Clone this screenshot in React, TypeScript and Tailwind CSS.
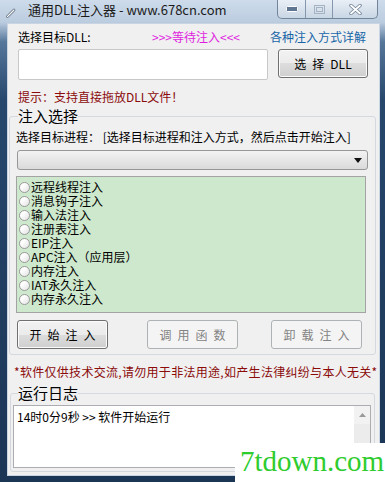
import React from "react";

const methods = [
  "远程线程注入",
  "消息钩子注入",
  "输入法注入",
  "注册表注入",
  "EIP注入",
  "APC注入（应用层）",
  "内存注入",
  "IAT永久注入",
  "内存永久注入",
];

function Radio() {
  return (
    <span className="mr-[1px] inline-block h-[11px] w-[11px] shrink-0 rounded-full border border-[#9a9a9a] bg-[linear-gradient(135deg,#ffffff_30%,#e2e2e2)]" />
  );
}

function SpacedButton({ text, disabled, className }: { text: string; disabled?: boolean; className: string }) {
  return (
    <div
      className={
        (disabled
          ? "border-[#adb2b5] bg-[#f4f4f4] text-[#838383] "
          : "border-[#707070] bg-[linear-gradient(180deg,#f2f2f2_0%,#ebebeb_50%,#dddddd_50%,#cfcfcf_100%)] text-black shadow-[inset_0_0_0_1px_#fbfbfb] ") +
        "flex h-[29px] w-[91px] items-center justify-center rounded-[3px] border pl-[6px] tracking-[6px] " +
        className
      }
    >
      {text}
    </div>
  );
}

export default function App() {
  return (
    <div className="relative h-[482px] w-[385px] overflow-hidden bg-[linear-gradient(180deg,#cddbeb_0px,#bccde0_22px,#56779a_42px,#27476d_100px,#1b3555_100%)] font-['Noto_Sans_CJK_SC','Noto_Sans',sans-serif]">
      {/* title bar */}
      <div className="flex h-[23px] items-start">
        <svg className="ml-[6px] mt-[8px]" width="10" height="10" viewBox="0 0 10 10">
          <path d="M1.5 8.5 L8 2" stroke="#5d6a78" strokeWidth="2.6" strokeLinecap="round" />
          <path d="M1.5 8.5 L8 2" stroke="#f5f7fa" strokeWidth="1.2" strokeLinecap="round" />
        </svg>
        <span className="ml-[12px] mt-[2px] text-[13px] leading-[16px] text-[#1b1b1b]">
          通用DLL注入器 - www.678cn.com
        </span>
        <div className="ml-auto mr-[7px] flex h-[19px] overflow-hidden rounded-b-[5px] border border-t-0 border-[#72859b] bg-[linear-gradient(180deg,#e9eff6,#c9d6e4)]">
          <div className="flex w-[28px] items-center justify-center border-r border-[#8597ac]">
            <svg width="12" height="6" viewBox="0 0 12 6">
              <rect x="0.5" y="0.5" width="11" height="5" rx="1" fill="#5f7692" stroke="#ffffff" />
            </svg>
          </div>
          <div className="flex w-[27px] items-center justify-center border-r border-[#8597ac]">
            <svg width="11" height="9" viewBox="0 0 11 9">
              <rect x="0.5" y="0.5" width="10" height="8" fill="none" stroke="#a4b2c3" />
              <rect x="2.5" y="2.5" width="6" height="4" fill="none" stroke="#a4b2c3" />
            </svg>
          </div>
          <div className="flex w-[44px] items-center justify-center">
            <svg width="13" height="11" viewBox="0 0 13 11">
              <path d="M2 1.5 L11 9.5 M11 1.5 L2 9.5" stroke="#6f8196" strokeWidth="3.4" strokeLinecap="round" />
              <path d="M2 1.5 L11 9.5 M11 1.5 L2 9.5" stroke="#ffffff" strokeWidth="1.8" strokeLinecap="round" />
            </svg>
          </div>
        </div>
      </div>

      {/* client area */}
      <div className="ml-[7px] mr-[5px] h-[453px] border border-[#c9d5e2] bg-[#f0f0f0] text-[12px] leading-[14px] text-black">
        <div className="mt-[6px] flex h-[14px]">
          <span className="ml-[10px] w-[134px]">选择目标DLL:</span>
          <span className="w-[118px] text-[#e01ee0]">&gt;&gt;&gt;等待注入&lt;&lt;&lt;</span>
          <span className="text-[#1766a8]">各种注入方式详解</span>
        </div>

        <div className="mt-[5px] flex items-start">
          <div className="ml-[10px] h-[31px] w-[250px] rounded-[2px] border border-[#c8c8c8] bg-white" />
          <div className="ml-[10px] flex h-[29px] w-[90px] items-center justify-center gap-[6px] rounded-[3px] border border-[#707070] bg-[linear-gradient(180deg,#f2f2f2_0%,#ebebeb_50%,#dddddd_50%,#cfcfcf_100%)] shadow-[inset_0_0_0_1px_#fbfbfb]">
            <span>选</span>
            <span>择</span>
            <span>DLL</span>
          </div>
        </div>

        <div className="ml-[10px] mt-[10px] text-[#8b0a0a]">提示：支持直接拖放DLL文件！</div>

        {/* 注入选择 group */}
        <fieldset className="ml-[1px] mt-[4px] w-[367px] rounded-[3px] border border-[#d3d9df] pb-[5px]">
          <legend className="ml-[8px] text-[15px] leading-[16px]">注入选择</legend>
          <div className="ml-[6px] mt-[6px] whitespace-nowrap">选择目标进程： [选择目标进程和注入方式，然后点击开始注入]</div>
          <div className="ml-[7px] mt-[6px] flex h-[20px] w-[351px] items-center justify-end rounded-[3px] border border-[#979797] bg-[linear-gradient(180deg,#f3f3f3,#dadada)] pr-[5px]">
            <svg width="8" height="5" viewBox="0 0 8 5">
              <path d="M0 0 H8 L4 5 Z" fill="#111111" />
            </svg>
          </div>
          <div className="ml-[6px] mt-[6px] h-[137px] w-[350px] border border-[#a3a3a3] bg-[#cde8cc] pl-[2px] pt-[3px]">
            {methods.map((m) => (
              <div key={m} className="flex h-[14px] items-center">
                <Radio />
                <span className="leading-[14px]">{m}</span>
              </div>
            ))}
          </div>
          <div className="mt-[7px] flex">
            <SpacedButton text="开始注入" className="ml-[7px]" />
            <SpacedButton text="调用函数" disabled className="ml-[39px] w-[90px]" />
            <SpacedButton text="卸载注入" disabled className="ml-[33px]" />
          </div>
        </fieldset>

        <div className="ml-[6px] mt-[10px] whitespace-nowrap tracking-[0.3px] text-[#8b0a0a]">
          *软件仅供技术交流,请勿用于非法用途,如产生法律纠纷与本人无关*
        </div>

        {/* 运行日志 group */}
        <fieldset className="ml-[2px] mt-[6px] w-[365px] rounded-[3px] border border-[#d3d9df] pb-[3px]">
          <legend className="ml-[7px] text-[15px] leading-[16px]">运行日志</legend>
          <div className="ml-[2px] mt-[4px] flex h-[63px] w-[358px] border border-[#abadb3] bg-white">
            <div className="flex-1 pl-[3px] pt-[4px]">14时0分9秒 &gt;&gt; 软件开始运行</div>
            <div className="flex w-[16px] flex-col bg-[#ececec]">
              <div className="flex h-[18px] items-center justify-center bg-[#f2f2f2]">
                <svg width="7" height="4" viewBox="0 0 7 4">
                  <path d="M0 4 L3.5 0 L7 4 Z" fill="#9a9a9a" />
                </svg>
              </div>
            </div>
          </div>
        </fieldset>
      </div>

      {/* watermark */}
      <div className="absolute bottom-0 right-0 h-[39px] w-[150px] bg-white pl-[5px] pt-[2px] font-['Liberation_Serif',serif] text-[29px] leading-[32px] text-[#2ecc2e]">
        7tdown.com
      </div>
    </div>
  );
}
